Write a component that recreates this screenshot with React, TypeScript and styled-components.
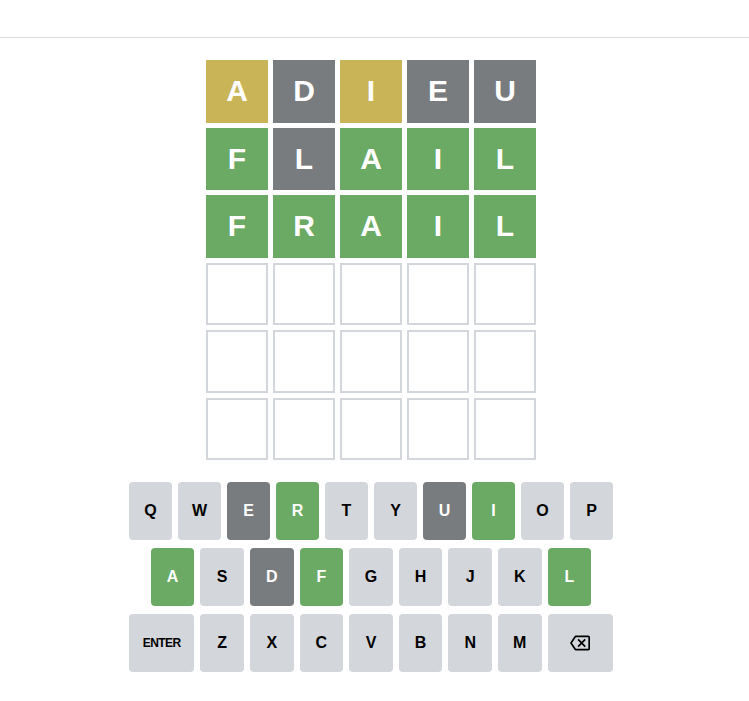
import React from 'react'
import styled, { createGlobalStyle } from 'styled-components'

type Status = 'correct' | 'present' | 'absent' | 'empty'

const colors = {
    correct: '#6aaa64',
    present: '#c9b458',
    absent: '#787c7e',
    key: '#d3d6da',
    border: '#d3d6da',
    text: '#000000',
}

const guesses: { letter: string; status: Status }[][] = [
    [
        { letter: 'A', status: 'present' },
        { letter: 'D', status: 'absent' },
        { letter: 'I', status: 'present' },
        { letter: 'E', status: 'absent' },
        { letter: 'U', status: 'absent' },
    ],
    [
        { letter: 'F', status: 'correct' },
        { letter: 'L', status: 'absent' },
        { letter: 'A', status: 'correct' },
        { letter: 'I', status: 'correct' },
        { letter: 'L', status: 'correct' },
    ],
    [
        { letter: 'F', status: 'correct' },
        { letter: 'R', status: 'correct' },
        { letter: 'A', status: 'correct' },
        { letter: 'I', status: 'correct' },
        { letter: 'L', status: 'correct' },
    ],
]

// keyboard colours come from the guesses above
const keyState: Record<string, Status> = {
    A: 'correct', D: 'absent', I: 'correct', E: 'absent', U: 'absent',
    F: 'correct', L: 'correct', R: 'correct',
}

const keyRows = [
    ['Q', 'W', 'E', 'R', 'T', 'Y', 'U', 'I', 'O', 'P'],
    ['A', 'S', 'D', 'F', 'G', 'H', 'J', 'K', 'L'],
    ['ENTER', 'Z', 'X', 'C', 'V', 'B', 'N', 'M', 'BACK'],
]

function BackspaceIcon() {
    return (
        <svg xmlns="http://www.w3.org/2000/svg" height="20" viewBox="0 0 24 24" width="20">
            <path
                fill={colors.text}
                d="M22 3H7c-.69 0-1.23.35-1.59.88L0 12l5.41 8.11c.36.53.9.89 1.59.89h15c1.1 0 2-.9 2-2V5c0-1.1-.9-2-2-2zm0 16H7.07L2.4 12l4.66-7H22v14zm-11.59-2L14 13.41 17.59 17 19 15.59 15.41 12 19 8.41 17.59 7 14 10.59 10.41 7 9 8.41 12.59 12 9 15.59z"
            />
        </svg>
    )
}

function App() {
    const rows = [...guesses]
    while (rows.length < 6) {
        rows.push(Array.from({ length: 5 }, () => ({ letter: '', status: 'empty' as Status })))
    }

    return (
        <>
            <GlobalStyle />
            <Header />
            <Main>
                <Game>
                    <Board>
                        {rows.map((row, r) => (
                            <BoardRow key={r}>
                                {row.map((tile, c) => (
                                    <Tile key={c} $status={tile.status}>{tile.letter}</Tile>
                                ))}
                            </BoardRow>
                        ))}
                    </Board>
                    <Keyboard>
                        {keyRows.map((row, r) => (
                            <KeyRow key={r}>
                                {r === 1 && <HalfSpacer />}
                                {row.map(k => (
                                    <Key
                                        key={k}
                                        $wide={k === 'ENTER' || k === 'BACK'}
                                        $status={keyState[k]}
                                    >
                                        {k === 'BACK' ? <BackspaceIcon /> : k}
                                    </Key>
                                ))}
                                {r === 1 && <HalfSpacer />}
                            </KeyRow>
                        ))}
                    </Keyboard>
                </Game>
            </Main>
        </>
    )
}

const GlobalStyle = createGlobalStyle`
html, body {
    margin: 0;
    padding: 0;
    background: #ffffff;
    font-family: "Liberation Sans", Arial, sans-serif;
}
`

const Header = styled.header`
height: 37px;
border-bottom: 1px solid #dcdcdc;
`

const Main = styled.main`
padding-right: 7px;
`

const Game = styled.div`
width: 500px;
margin: 0 auto;
display: flex;
flex-direction: column;
align-items: center;
`

const Board = styled.div`
width: 350px;
height: 420px;
box-sizing: border-box;
padding: 10px;
margin-top: 12px;
display: grid;
grid-template-rows: repeat(6, 1fr);
gap: 5px;
`

const BoardRow = styled.div`
display: grid;
grid-template-columns: repeat(5, 1fr);
gap: 5px;
`

const Tile = styled.div<{ $status: Status }>`
box-sizing: border-box;
display: flex;
justify-content: center;
align-items: center;
font-size: 30px;
font-weight: 700;
line-height: 1;
color: #ffffff;
text-transform: uppercase;
background: ${p => p.$status === 'empty' ? 'transparent' : colors[p.$status]};
border: ${p => p.$status === 'empty' ? `2px solid ${colors.border}` : 'none'};
`

const Keyboard = styled.div`
width: 484px;
margin-top: 12px;
`

const KeyRow = styled.div`
display: flex;
width: 100%;
margin: 0 auto 8px;
`

const HalfSpacer = styled.div`
flex: 0.5;
`

const Key = styled.button<{ $wide?: boolean; $status?: Status }>`
font-family: "Liberation Sans", Arial, sans-serif;
font-weight: 700;
font-size: ${p => p.$wide ? '12px' : '16px'};
letter-spacing: ${p => p.$wide ? '-0.6px' : '0'};
border: 0;
padding: 0;
margin: 0 6px 0 0;
height: 58px;
border-radius: 4px;
flex: ${p => p.$wide ? 1.5 : 1};
display: flex;
justify-content: center;
align-items: center;
cursor: pointer;
background: ${p => p.$status ? colors[p.$status] : colors.key};
color: ${p => p.$status ? '#ffffff' : colors.text};

&:last-of-type {
    margin: 0;
}
`

export default App
